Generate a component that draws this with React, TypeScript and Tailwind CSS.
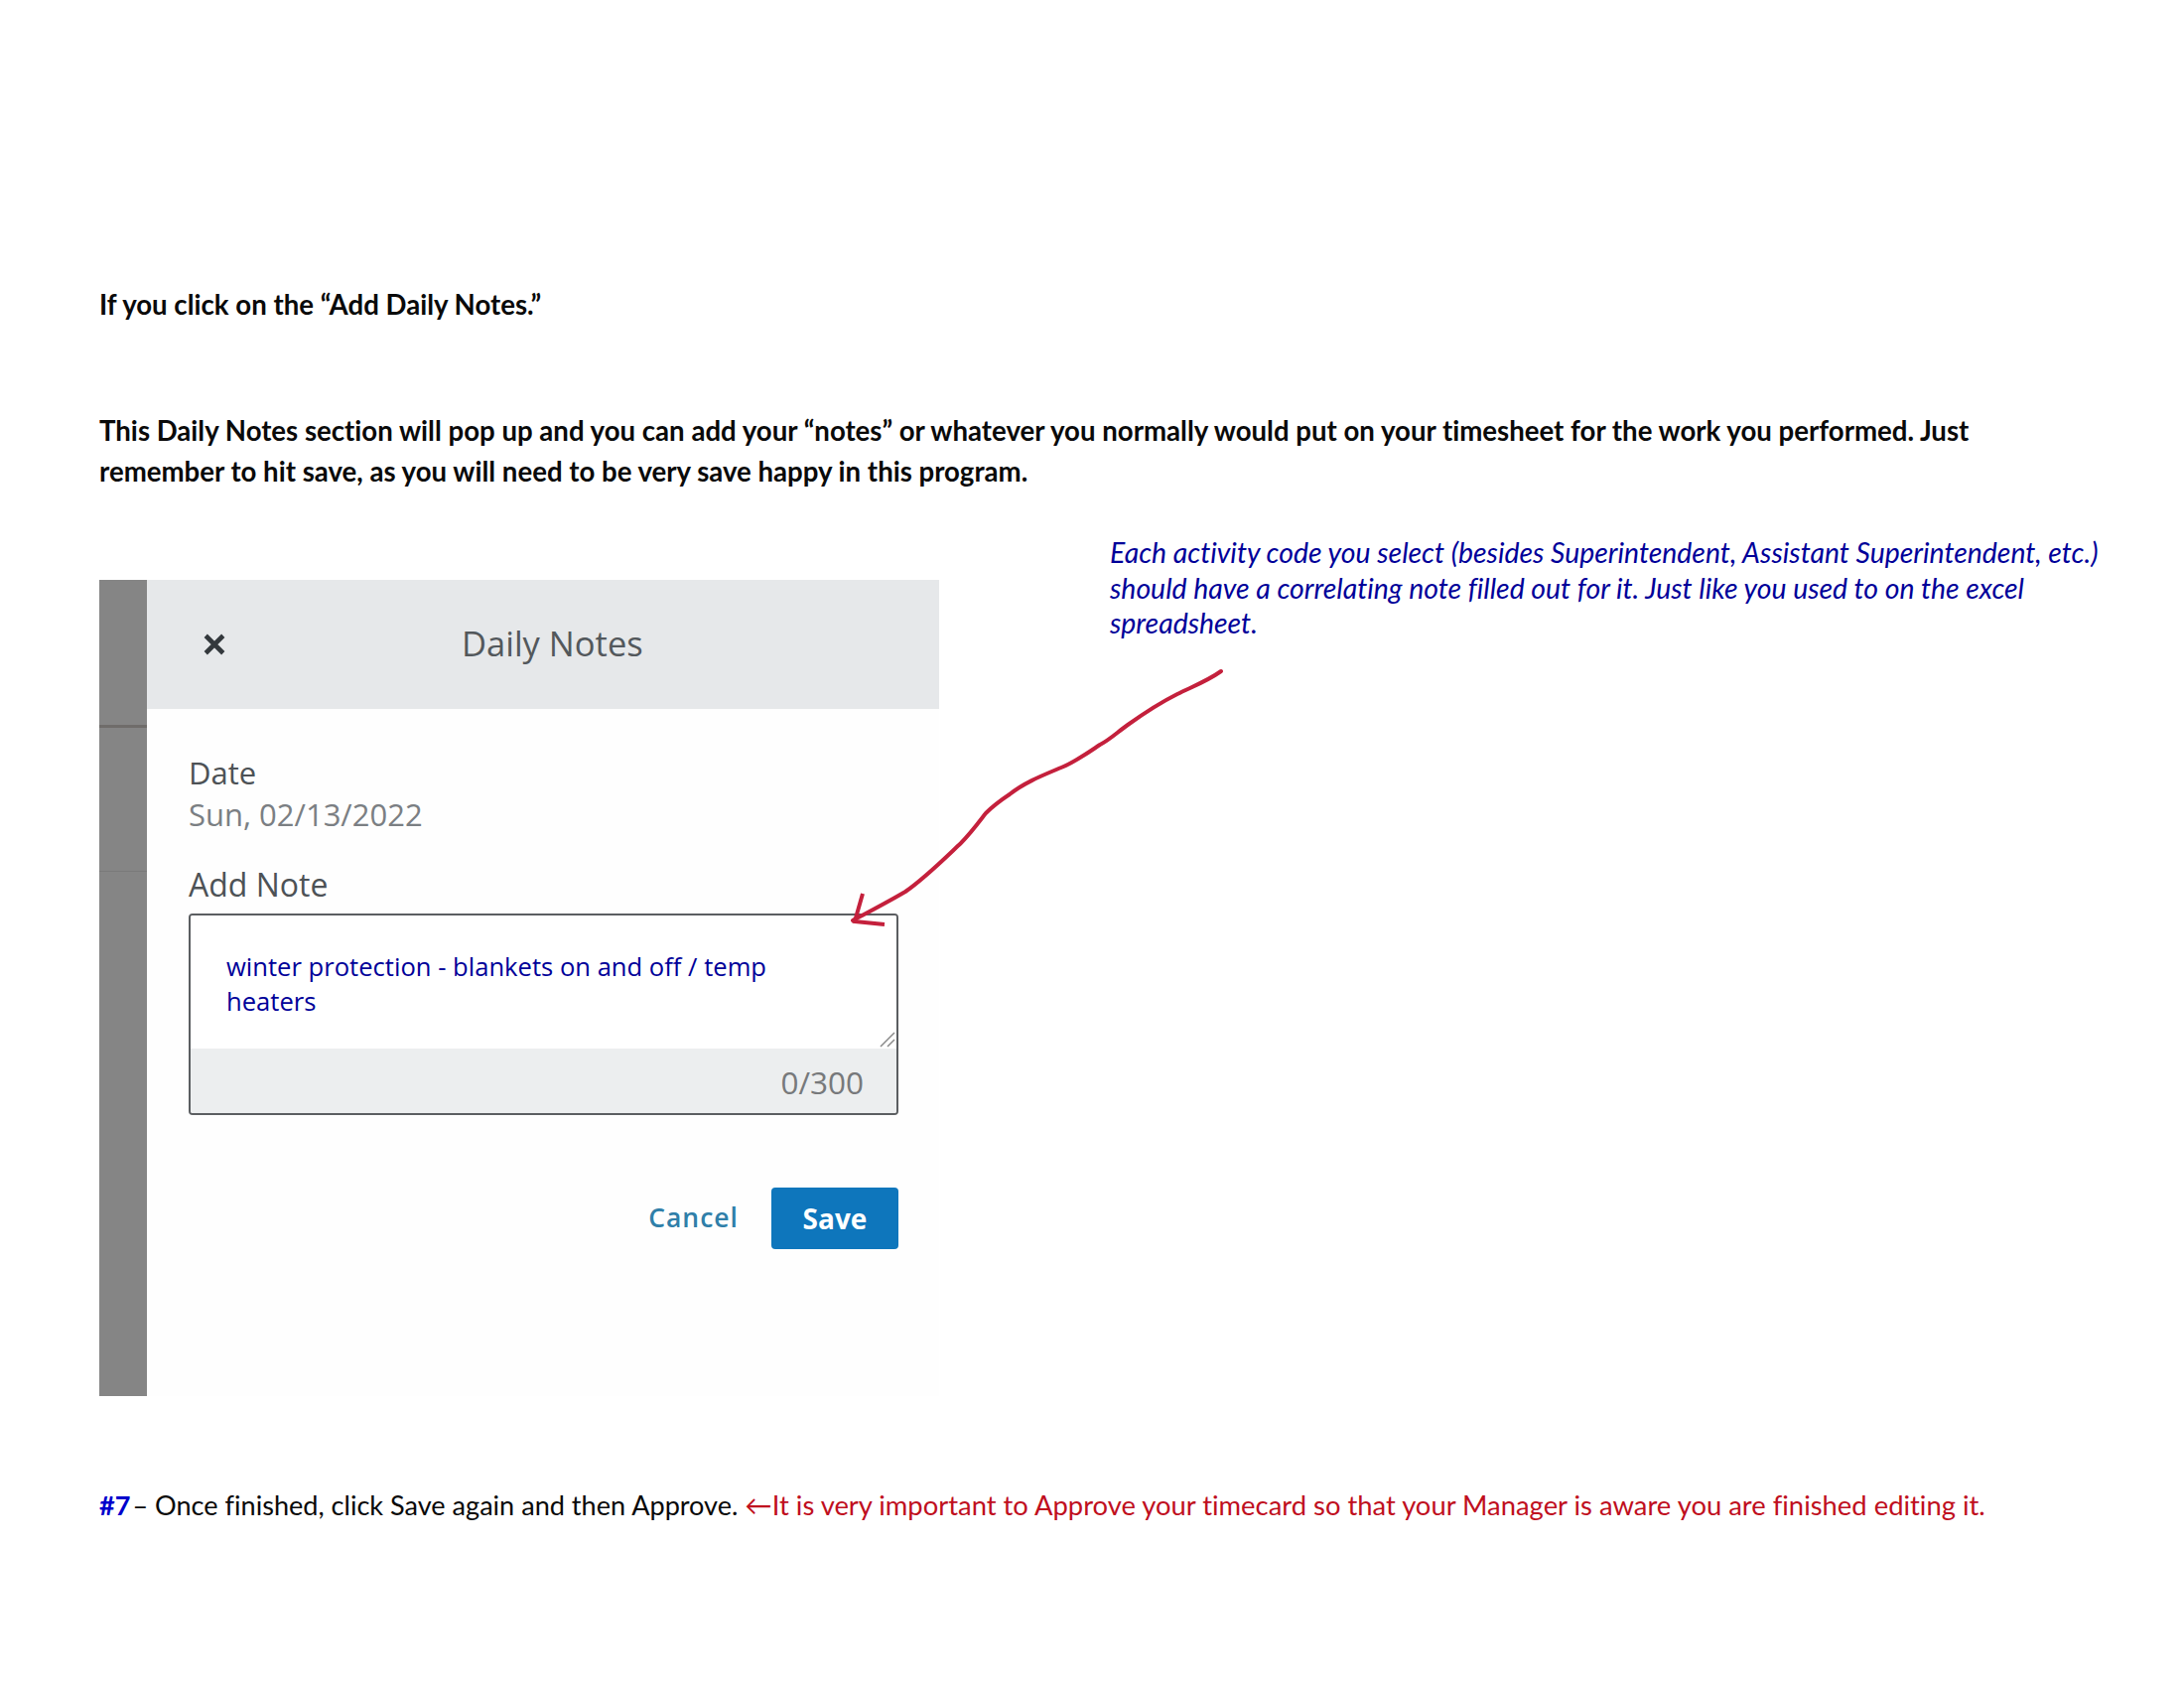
const calibri = { fontFamily: '"Lato", "Liberation Sans", sans-serif', fontVariantLigatures: 'none' as const }

function DailyNotes() {
  return (
    <div className="flex w-[846px] h-[822px] font-['Open_Sans',sans-serif]">
      <div className="w-[48px] flex flex-col bg-[#858585]">
        <div className="h-[149px] border-b-[3px] border-[#6f6c6a]" />
        <div className="h-[145px] border-b border-[#7a7a7a]" />
      </div>
      <div className="flex-1 flex flex-col bg-[#fefefe]">
        <header className="h-[130px] flex items-center bg-[#e6e8ea] pl-[54px]">
          <svg width="28" height="28" viewBox="0 0 24 24" className="text-[#33383c]">
            <path d="M4.5 4.5 19.5 19.5M19.5 4.5 4.5 19.5" stroke="currentColor" strokeWidth="4" fill="none" />
          </svg>
          <h2 className="ml-[235px] text-[34.5px] leading-none text-[#53585c] -translate-y-px">Daily Notes</h2>
        </header>
        <div className="flex flex-col pl-[42px] pr-[41px]">
          <div className="mt-[46px] text-[31px] leading-[36px] text-[#4d5256]">Date</div>
          <div className="mt-[6px] text-[31px] leading-[36px] text-[#7b7f83]">Sun, 02/13/2022</div>
          <div className="mt-[35px] text-[32px] leading-[36px] text-[#4d5256]">Add Note</div>
          <div className="mt-[11px] h-[203px] flex flex-col rounded-[4px] border-2 border-[#5b5e61] overflow-hidden">
            <div className="relative flex-1 bg-white pl-[36px] pt-[34px] text-[#000099] text-[25.6px] leading-[35px]">
              <p>winter protection - blankets on and off / temp</p>
              <p>heaters</p>
              <svg width="18" height="18" viewBox="0 0 18 18" className="absolute right-0 bottom-0 text-[#8a8a8a]">
                <path d="M2 16 16 2M9 16 16 9" stroke="currentColor" strokeWidth="1.5" fill="none" />
              </svg>
            </div>
            <div className="h-[65px] flex items-center justify-end bg-[#eceeef] pr-[33px] pt-[2px] text-[31.5px] text-[#77797b]">
              0/300
            </div>
          </div>
          <div className="mt-[73px] flex items-center justify-end">
            <button className="text-[26.5px] font-semibold tracking-[1px] text-[#2f7fa9]">Cancel</button>
            <button className="ml-[33px] w-[128px] h-[62px] rounded-[4px] bg-[#0e76bc] text-[28px] font-bold text-white">
              Save
            </button>
          </div>
        </div>
      </div>
    </div>
  )
}

export default function App() {
  return (
    <div className="relative w-[2200px] h-[1700px] bg-white pl-[100px] pt-[288px] text-[#0a0a0a] overflow-hidden" style={calibri}>
      <p className="text-[27.6px] leading-[38px] font-bold">If you click on the “Add Daily Notes.”</p>
      <p className="mt-[87px] w-[1920px] text-[27.6px] leading-[41px] font-bold">
        This Daily Notes section will pop up and you can add your “notes” or whatever you normally would put on your
        timesheet for the work you performed. Just remember to hit save, as you will need to be very save happy in this
        program.
      </p>

      <div className="mt-[44px] flex items-start">
        <div className="mt-[45px]">
          <DailyNotes />
        </div>
        <div className="ml-[172px] w-[1030px] text-[28.4px] leading-[35.5px] italic text-[#000099]">
          Each activity code you select (besides Superintendent, Assistant Superintendent, etc.) should have a
          correlating note filled out for it. Just like you used to on the excel spreadsheet.
        </div>
      </div>

      <p className="mt-[91px] text-[27.1px] leading-[38px]">
        <span className="font-bold text-[#0000cc]">#7</span>
        <span className="ml-[2px]">– Once finished, click Save again and then Approve. </span>
        <span className="text-[#c00f1e] text-[27.4px]">←It is very important to Approve your timecard so that your Manager is aware you are finished editing it.</span>
      </p>

      {/* hand drawn arrow on top of the screenshot */}
      <svg width="2200" height="1700" viewBox="0 0 2200 1700" className="absolute inset-0 pointer-events-none">
        <path
          d="M1230 676C1216 686 1200 692 1186 699C1168 708 1150 720 1136 730C1126 737 1118 745 1108 750C1096 758 1082 768 1069 773C1050 781 1032 788 1017 800C1008 806 1000 812 993 819C986 828 978 839 968 849C950 866 932 884 912 898C895 908 876 918 859 927"
          stroke="#c4203c"
          strokeWidth="4"
          fill="none"
          strokeLinecap="round"
        />
        <path d="M869 900 861 928 891 931" stroke="#c4203c" strokeWidth="4" fill="none" />
      </svg>
    </div>
  )
}
